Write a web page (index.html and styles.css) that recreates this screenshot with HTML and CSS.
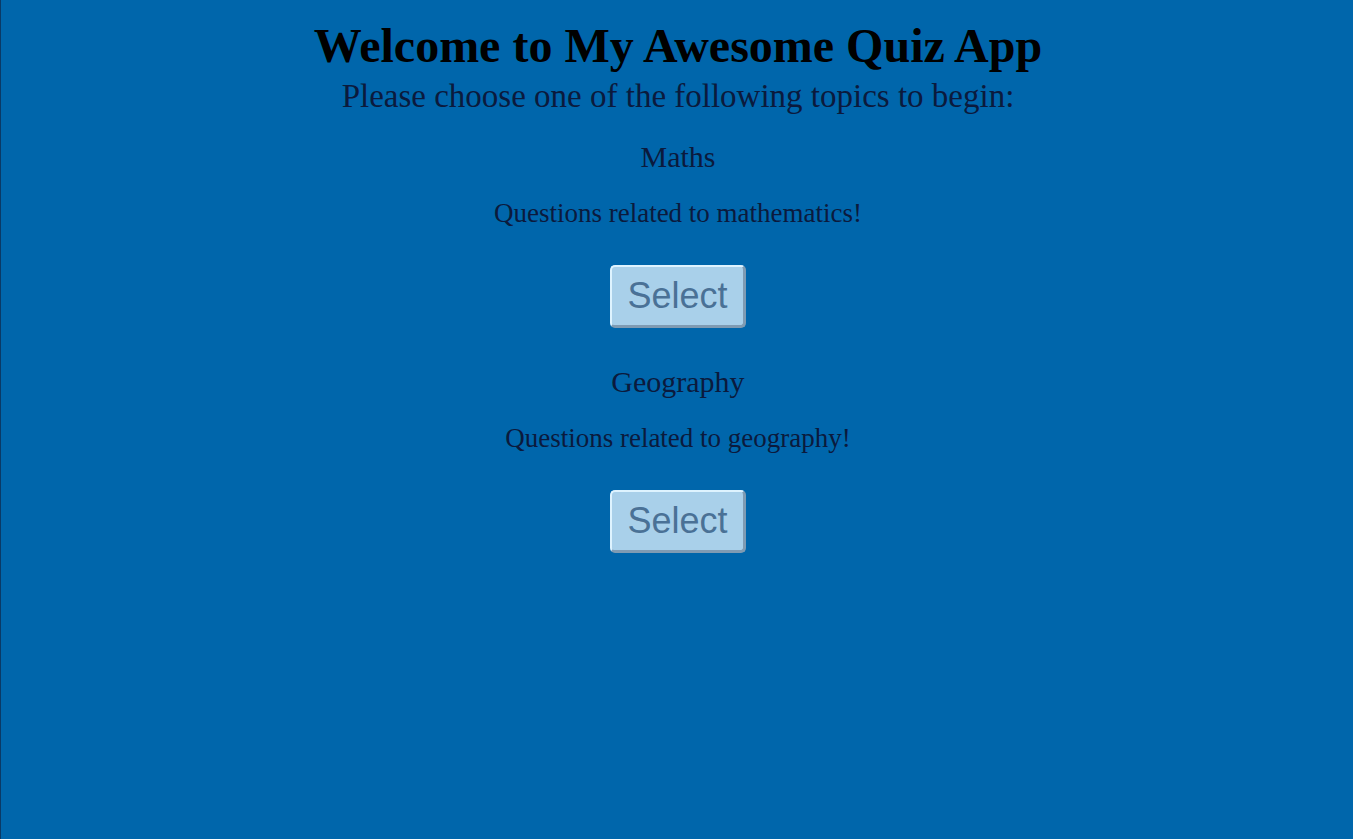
FILE: index.html
```html
<!DOCTYPE html>
<html>
<head>
<meta charset="utf-8">
<link rel="stylesheet" href="styles.css">
</head>
<body>
<main class="app">
  <h1 class="title">Welcome to My Awesome Quiz App</h1>
  <p class="subtitle">Please choose one of the following topics to begin:</p>
  <div class="topics">
    <section class="topic">
      <h2 class="topic-name">Maths</h2>
      <p class="topic-desc">Questions related to mathematics!</p>
      <button class="select-btn">Select</button>
    </section>
    <section class="topic">
      <h2 class="topic-name">Geography</h2>
      <p class="topic-desc">Questions related to geography!</p>
      <button class="select-btn">Select</button>
    </section>
  </div>
</main>
</body>
</html>
```
FILE: styles.css
```css
html, body {
  margin: 0;
  padding: 0;
  height: 100%;
}
body {
  background: #0066ab;
  font-family: "Liberation Serif", "Times New Roman", serif;
  border-left: 1px solid #0a3a66;
  box-sizing: border-box;
}
.app {
  display: flex;
  flex-direction: column;
  align-items: center;
  text-align: center;
  padding-top: 18px;
  padding-left: 2px;
}
.title {
  margin: 0;
  font-size: 48px;
  font-weight: bold;
  color: #000;
  line-height: 56px;
}
.subtitle {
  margin: 2px 0 0;
  font-size: 33px;
  line-height: 40px;
  color: #0b1a3d;
}
.topics {
  display: flex;
  flex-direction: column;
  align-items: center;
  gap: 13px;
}
.topic {
  display: flex;
  flex-direction: column;
  align-items: center;
}
.topic-name {
  margin: 23px 0 0;
  font-size: 30px;
  font-weight: normal;
  line-height: 36px;
  color: #0b1a3d;
}
.topic-desc {
  margin: 22px 0 0;
  font-size: 27px;
  line-height: 32px;
  color: #0b1a3d;
}
.select-btn {
  margin-top: 36px;
  width: 136px;
  height: 63px;
  font-family: "Liberation Sans", Arial, sans-serif;
  font-size: 36px;
  color: #4a7196;
  background: #a9d0ea;
  border-style: solid;
  border-width: 2px 3px 3px 2px;
  border-color: #def3ff #7f9bb3 #7f9bb3 #def3ff;
  border-radius: 5px;
  padding: 0;
}
```
